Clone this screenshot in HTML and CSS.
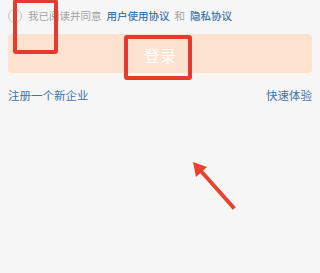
FILE: index.html
```html
<!DOCTYPE html>
<html lang="zh">
<head>
<meta charset="utf-8">
<link rel="stylesheet" href="styles.css">
</head>
<body>
<div class="page">
  <div class="agree">
    <span class="radio"></span>
    <span class="muted">我已阅读并同意</span>
    <span class="link">用户使用协议</span>
    <span class="muted">和</span>
    <span class="link">隐私协议</span>
  </div>
  <div class="login">登录</div>
  <div class="actions">
    <span class="action">注册一个新企业</span>
    <span class="action">快速体验</span>
  </div>
</div>
<div class="mark mark-one"></div>
<div class="mark mark-two"></div>
<svg class="arrow" width="320" height="273" viewBox="0 0 320 273">
  <line x1="200" y1="170" x2="233" y2="207" stroke="#e8432f" stroke-width="4" stroke-linecap="square"/>
  <polygon points="193,162 207,167 196,177" fill="#e8432f"/>
</svg>
</body>
</html>
```

FILE: styles.css
```css
html, body {
  margin: 0;
  padding: 0;
}
body {
  width: 320px;
  height: 273px;
  background: #f6f6f6;
  font-family: "Noto Sans CJK SC", "Noto Sans", sans-serif;
  position: relative;
  overflow: hidden;
}
.page {
  padding: 9px 8px 0 8px;
}
.agree {
  display: flex;
  align-items: center;
  height: 14px;
  font-size: 10.5px;
  line-height: 14px;
  gap: 5px;
}
.radio {
  width: 12px;
  height: 12px;
  border: 1px solid #c4c4c4;
  border-radius: 50%;
  margin-right: 1px;
  flex: none;
}
.muted {
  color: #a3a3a3;
}
.link {
  color: #3f74a8;
  font-weight: 500;
}
.login {
  margin-top: 11px;
  height: 39px;
  background: #fde2cf;
  border-radius: 4px;
  color: #ffffff;
  font-size: 16px;
  display: flex;
  align-items: center;
  justify-content: center;
  padding-top: 2px;
  box-sizing: border-box;
}
.actions {
  margin-top: 14px;
  display: flex;
  justify-content: space-between;
  font-size: 11.5px;
  line-height: 16px;
}
.action {
  color: #3f74a8;
}
.mark {
  position: absolute;
  border: 4px solid #e53a2d;
  border-radius: 3px;
  box-sizing: border-box;
}
.mark-one {
  left: 13px;
  top: -1px;
  width: 45px;
  height: 55px;
}
.mark-two {
  left: 124px;
  top: 35px;
  width: 68px;
  height: 45px;
}
.arrow {
  position: absolute;
  left: 0;
  top: 0;
}
```
